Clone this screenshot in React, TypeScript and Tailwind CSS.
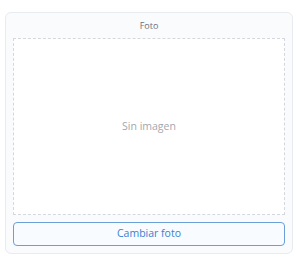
export default function App() {
  return (
    <div className="w-[297px] h-[261px] bg-white pt-[12px] pl-[5px]" style={{ fontFamily: '"Open Sans", "Noto Sans", sans-serif' }}>
      <div className="w-[288px] h-[242px] rounded-[6px] border border-[#e8ebef] bg-[#fafbfc] flex flex-col px-[7px] pb-[6px]">
        <div className="h-[25px] pt-[1px] flex items-center justify-center text-[9px] text-[#6b7280]">Foto</div>
        <div className="h-[177px] border border-dashed border-[#d4d8de] bg-white flex items-center justify-center text-[10.5px] text-[#a3a8b0]">
          Sin imagen
        </div>
        <button className="mt-[7px] h-[24px] rounded-[4px] border border-[#6a9fd8] bg-[#f8fbff] text-[10.5px] font-medium text-[#3b7fd0] flex items-center justify-center">
          Cambiar foto
        </button>
      </div>
    </div>
  );
}
